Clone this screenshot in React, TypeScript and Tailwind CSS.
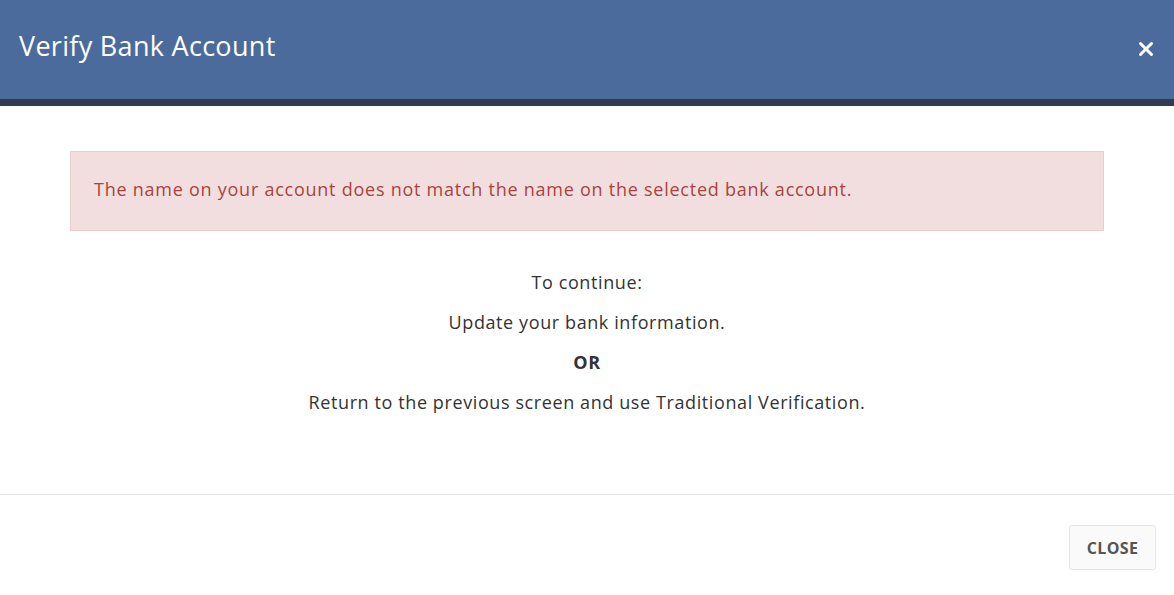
import { X } from "lucide-react";

export default function App() {
  return (
    <div className="w-[1174px] h-[595px] bg-white flex flex-col font-['Open_Sans','Liberation_Sans',sans-serif] overflow-hidden">
      {/* Header */}
      <div className="h-[99px] bg-[#4a6b9b] flex items-center justify-between pl-[19px] pr-[17px] shrink-0">
        <h1 className="text-[27px] tracking-[0.3px] text-white font-normal leading-none -mt-[9px]">Verify Bank Account</h1>
        <X className="w-[22px] h-[22px] text-white -mt-[2px]" strokeWidth={3.3} />
      </div>
      <div className="h-[7px] bg-[#353a51] shrink-0" />

      {/* Body */}
      <div className="px-[70px] pt-[45px] h-[389px] border-b border-[#e5e5e5] shrink-0">
        <div className="h-[80px] bg-[#f2dede] border border-[#ebccd1] flex items-center px-[23px]">
          <p className="text-[#a94442] text-[18px] tracking-[0.75px] -mt-[3px]">
            The name on your account does not match the name on the selected bank account.
          </p>
        </div>
        <div className="mt-[39px] flex flex-col items-center gap-[16px] text-[18px] tracking-[0.6px] text-[#333] leading-[24px]">
          <p>To continue:</p>
          <p>Update your bank information.</p>
          <p className="font-bold">OR</p>
          <p>Return to the previous screen and use Traditional Verification.</p>
        </div>
      </div>

      {/* Footer */}
      <div className="flex justify-end pr-[18px] pt-[30px]">
        <button className="h-[45px] w-[87px] bg-[#fafafa] border border-[#e6e6e6] rounded-[3px] text-[16px] tracking-[0.4px] font-bold text-[#555]">
          CLOSE
        </button>
      </div>
    </div>
  );
}
